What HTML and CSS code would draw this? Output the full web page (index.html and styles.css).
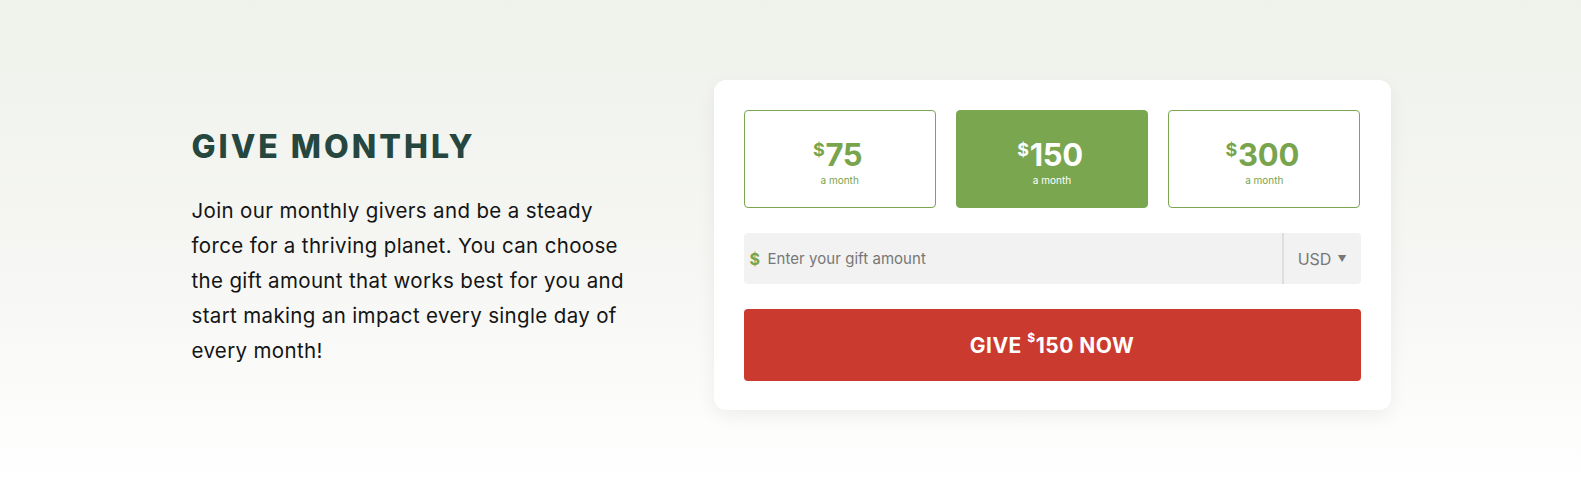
FILE: index.html
```html
<!DOCTYPE html>
<html lang="en">
<head>
<meta charset="utf-8">
<title>Give Monthly</title>
<link rel="stylesheet" href="styles.css">
</head>
<body>
<section class="page">
  <div class="container">
    <div class="intro">
      <h2 class="intro-title">GIVE MONTHLY</h2>
      <p class="intro-text">Join our monthly givers and be a steady force for a thriving planet. You can choose the gift amount that works best for you and start making an impact every single day of every month!</p>
    </div>
    <div class="card">
      <div class="amounts">
        <button class="amount"><span class="amount-value"><sup class="cur">$</sup>75</span><span class="amount-period">a month</span></button>
        <button class="amount amount-active"><span class="amount-value"><sup class="cur">$</sup>150</span><span class="amount-period">a month</span></button>
        <button class="amount"><span class="amount-value"><sup class="cur">$</sup>300</span><span class="amount-period">a month</span></button>
      </div>
      <div class="field">
        <span class="field-dollar">$</span>
        <span class="field-placeholder">Enter your gift amount</span>
        <span class="field-currency">USD <span class="caret">▼</span></span>
      </div>
      <button class="give">GIVE <sup class="give-cur">$</sup>150 NOW</button>
    </div>
  </div>
</section>
</body>
</html>
```

FILE: styles.css
```css
* { box-sizing: border-box; }
html, body { margin: 0; padding: 0; }
body {
  font-family: "Inter", "Liberation Sans", sans-serif;
  background: #fff;
}
.page {
  height: 491px;
  background: linear-gradient(to bottom, #eff1eb 0%, #f6f7f4 55%, #ffffff 100%);
  display: flex;
  align-items: flex-start;
  padding-top: 80px;
}
.container {
  width: 1200px;
  margin: 0 auto;
  display: flex;
  justify-content: space-between;
  align-items: center;
}
.intro {
  width: 470px;
  padding: 4px 0 0 1px;
}
.intro-title {
  margin: 0 0 26px;
  font-size: 32px;
  font-weight: 800;
  color: #264740;
  letter-spacing: 3px;
  line-height: 40px;
}
.intro-text {
  margin: 0;
  font-size: 20.5px;
  line-height: 35px;
  color: #141414;
  max-width: 452px;
  letter-spacing: 0.35px;
}
.card {
  width: 677px;
  background: #fff;
  border-radius: 12px;
  padding: 30px 30px 29px;
  box-shadow: 0 6px 18px rgba(0, 0, 0, 0.06);
}
.amounts {
  display: grid;
  grid-template-columns: repeat(3, 1fr);
  gap: 20px;
}
.amount {
  height: 98px;
  border: 1px solid #7aa650;
  border-radius: 4px;
  background: #fff;
  color: #78a44e;
  font-family: inherit;
  display: flex;
  flex-direction: column;
  align-items: center;
  justify-content: center;
  padding: 6px 0 0;
}
.amount-active {
  background: #7aa650;
  color: #fff;
}
.amount-value {
  font-size: 31px;
  font-weight: 700;
  line-height: 36px;
  padding-right: 4px;
  letter-spacing: -0.3px;
}
.cur {
  font-size: 18px;
  vertical-align: top;
  position: relative;
  top: -5px;
  margin-right: 1px;
}
.amount-period {
  font-size: 10px;
  line-height: 14px;
}
.field {
  margin-top: 25px;
  height: 51px;
  background: #f2f2f2;
  border-radius: 4px;
  display: flex;
  align-items: center;
}
.field-dollar {
  color: #78a44e;
  font-weight: 700;
  font-size: 16px;
  padding-left: 6px;
  width: 24px;
}
.field-placeholder {
  flex: 1;
  color: #777;
  font-size: 15px;
  letter-spacing: 0.05px;
}
.field-currency {
  align-self: stretch;
  display: flex;
  align-items: center;
  border-left: 2px solid #dedede;
  padding: 0 14px 0 14px;
  color: #777;
  font-size: 16px;
  gap: 6px;
}
.caret {
  font-size: 9px;
}
.give {
  margin-top: 25px;
  width: 100%;
  height: 72px;
  border: none;
  border-radius: 4px;
  background: #cb3a2f;
  color: #fff;
  font-family: inherit;
  font-weight: 700;
  font-size: 21px;
  display: block;
  padding: 0;
  letter-spacing: 0.5px;
}
.give-cur {
  font-size: 12px;
  vertical-align: top;
  position: relative;
  top: -3px;
}
```
